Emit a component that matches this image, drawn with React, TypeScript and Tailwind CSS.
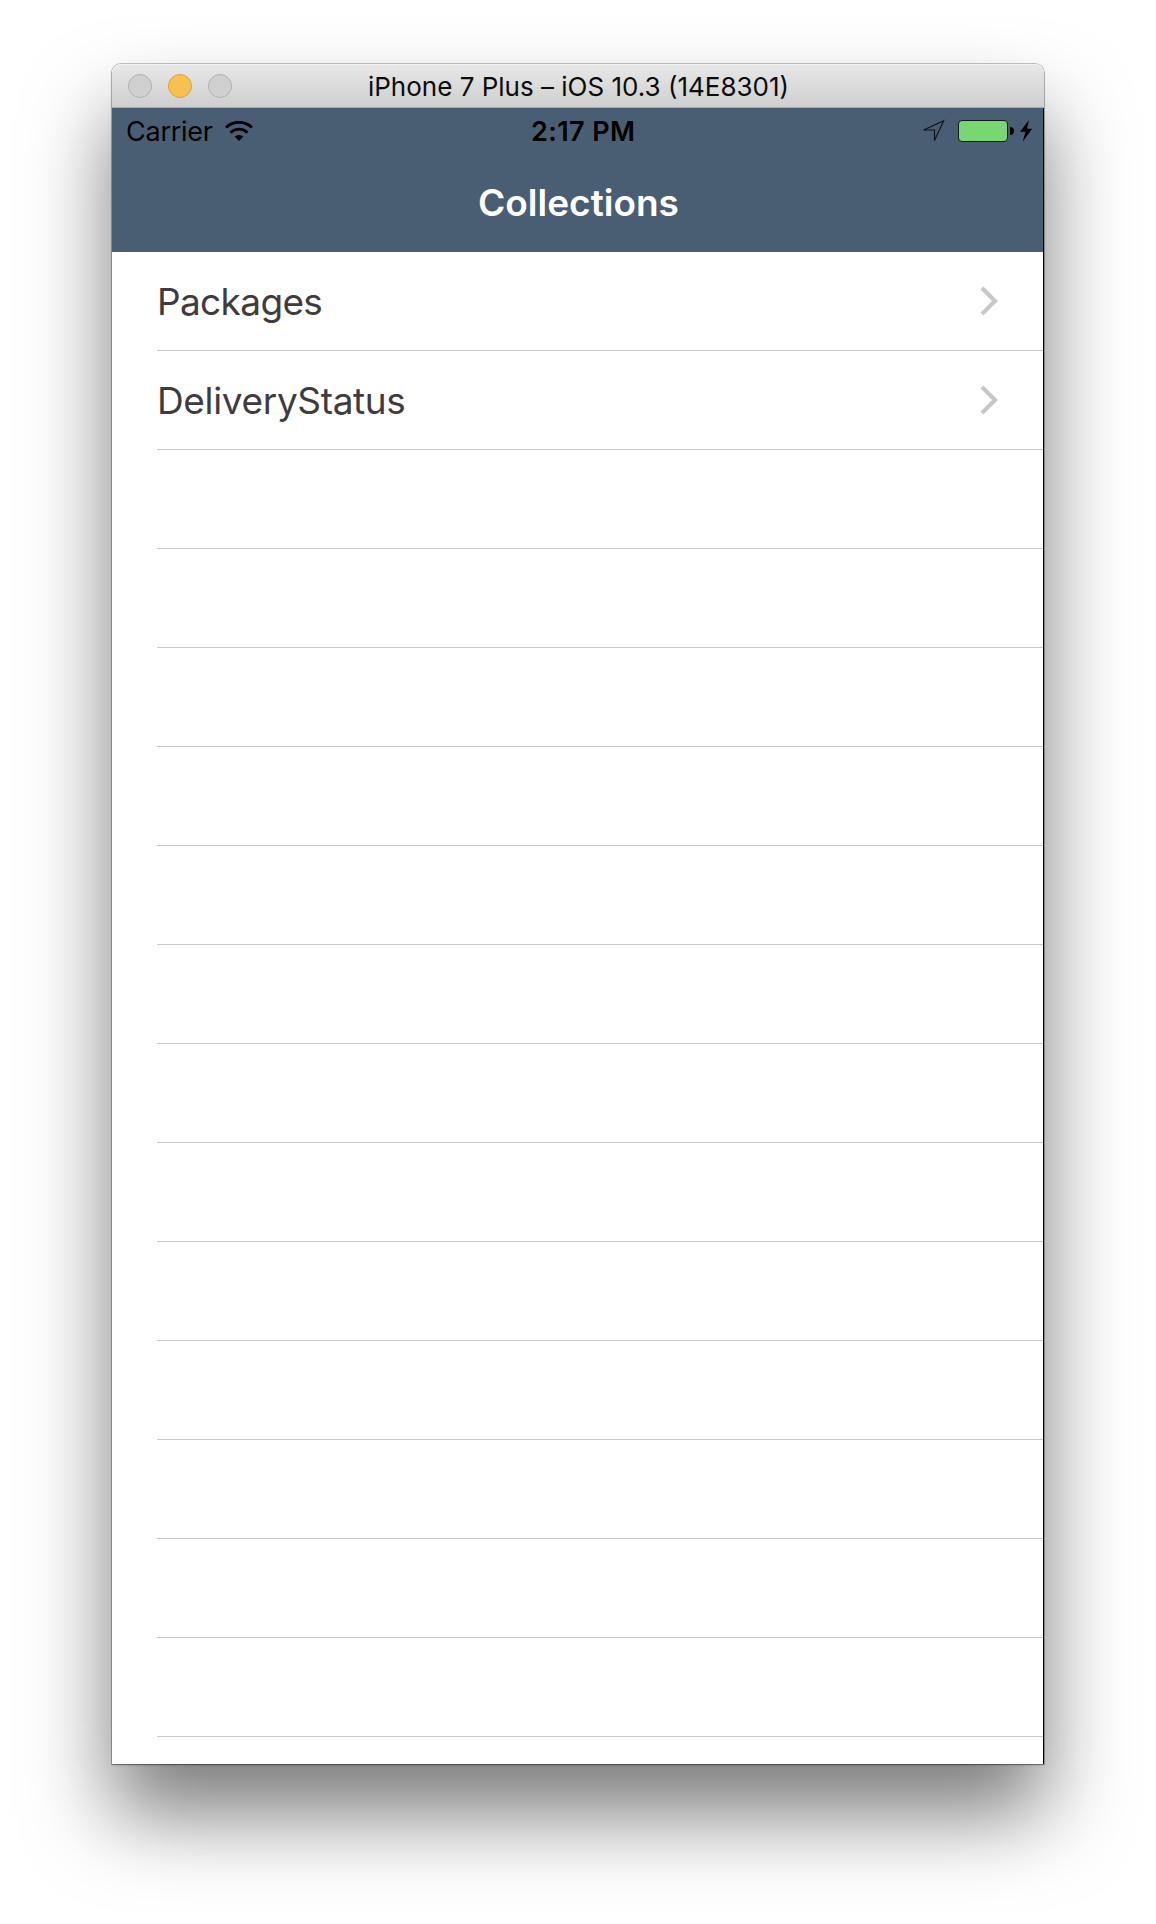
const collections = [
  { name: 'Packages', tracking: 'tracking-[-0.65px]' },
  { name: 'DeliveryStatus', tracking: 'tracking-[-0.35px]' },
];
const ROW_COUNT = 15;

function WifiIcon() {
  return (
    <svg className="ml-[12px] h-[20px] w-[28px]" viewBox="0 0 28 20" fill="none" stroke="#000" strokeWidth="2.9">
      <path d="M1.1 6.5A18.6 18.6 0 0 1 26.9 6.5" />
      <path d="M5.5 11.6A12.2 12.2 0 0 1 22.5 11.6" />
      <path d="M14 20L9.6 15.6A6.8 6.8 0 0 1 18.4 15.6Z" fill="#000" stroke="none" />
    </svg>
  );
}

function LocationIcon() {
  return (
    <svg className="h-[24px] w-[24px]" viewBox="0 0 24 24" fill="none" stroke="#0c1116" strokeWidth="1.1">
      <path d="M22.7 1.7L2.6 11H13.5V21.5Z" />
    </svg>
  );
}

function BoltIcon() {
  return (
    <svg className="ml-[6px] h-[22px] w-[13px]" viewBox="0 0 13 22">
      <path d="M9 0L0 11.8H5.5L2.6 21.7L12.2 8.7H7Z" fill="#000" />
    </svg>
  );
}

function Chevron() {
  return (
    <svg className="-mt-px h-[30px] w-[18px]" viewBox="0 0 18 30" fill="none" stroke="#c7c7cc" strokeWidth="4.2">
      <path d="M2 2L15 15L2 28" />
    </svg>
  );
}

function TitleBar() {
  return (
    <div className="grid h-[44px] grid-cols-[1fr_auto_1fr] items-center rounded-t-[9px] border-b border-[#a9a8a8] bg-linear-to-b from-[#e8e8e8] to-[#cfcfcf] px-[16px] shadow-[inset_0_1px_0_#f3f3f3]">
      <div className="flex gap-[16px]">
        <span className="size-[24px] rounded-full border border-[#b0b0b0] bg-[#d0d0d0]" />
        <span className="size-[24px] rounded-full border border-[#dba03f] bg-[#f7c150]" />
        <span className="size-[24px] rounded-full border border-[#b0b0b0] bg-[#d0d0d0]" />
      </div>
      <h1 className="pt-[3px] pl-px text-[26px] leading-[32px] whitespace-nowrap text-[#0c0c0c]">
        iPhone 7 Plus – iOS 10.3 (14E8301)
      </h1>
    </div>
  );
}

function StatusBar() {
  return (
    <div className="grid h-[46px] grid-cols-[419px_1fr_auto] items-center pl-[14px] text-[27px] leading-[32px] text-black">
      <div className="flex items-center">
        <span className="pt-[2px] tracking-[-0.25px]">Carrier</span>
        <WifiIcon />
      </div>
      <span className="-ml-[14px] pt-[2px] font-semibold tracking-[0.4px]">2:17 PM</span>
      <div className="flex items-center pr-[10.5px]">
        <LocationIcon />
        <span className="ml-[13.5px] h-[22px] w-[50px] rounded-[4px] border border-[#111a20] bg-[#77d872]" />
        <span className="ml-[2px] h-[8px] w-[3.5px] rounded-r-full bg-black" />
        <BoltIcon />
      </div>
    </div>
  );
}

export default function App() {
  return (
    <div className="flex h-[1924px] w-[1156px] items-start justify-center overflow-hidden bg-white pt-[64px] font-['Inter',sans-serif]">
      <main className="w-[932px] rounded-t-[9px] shadow-[0_0_0_1px_rgba(0,0,0,0.22),0_1px_2px_rgba(0,0,0,0.35),0_50px_84px_rgba(0,0,0,0.52)]">
        <TitleBar />
        <div className="border-r border-black bg-white">
          <header className="h-[144px] bg-[#4a5e73]">
            <StatusBar />
            <h2 className="mt-[26px] pl-[2px] text-center text-[37px] leading-[45px] font-semibold text-white">Collections</h2>
          </header>
          <ul className="h-[1512px] pl-[45px]">
            {Array.from({ length: ROW_COUNT }, (_, i) => {
              const item = collections[i];
              return (
                <li key={i} className="flex h-[99px] items-center justify-between border-b border-[#c8c7cc] pr-[45px]">
                  {item && (
                    <>
                      <span className={`text-[37px] leading-[45px] text-[#403c3d] ${item.tracking}`}>{item.name}</span>
                      <Chevron />
                    </>
                  )}
                </li>
              );
            })}
          </ul>
        </div>
      </main>
    </div>
  );
}
